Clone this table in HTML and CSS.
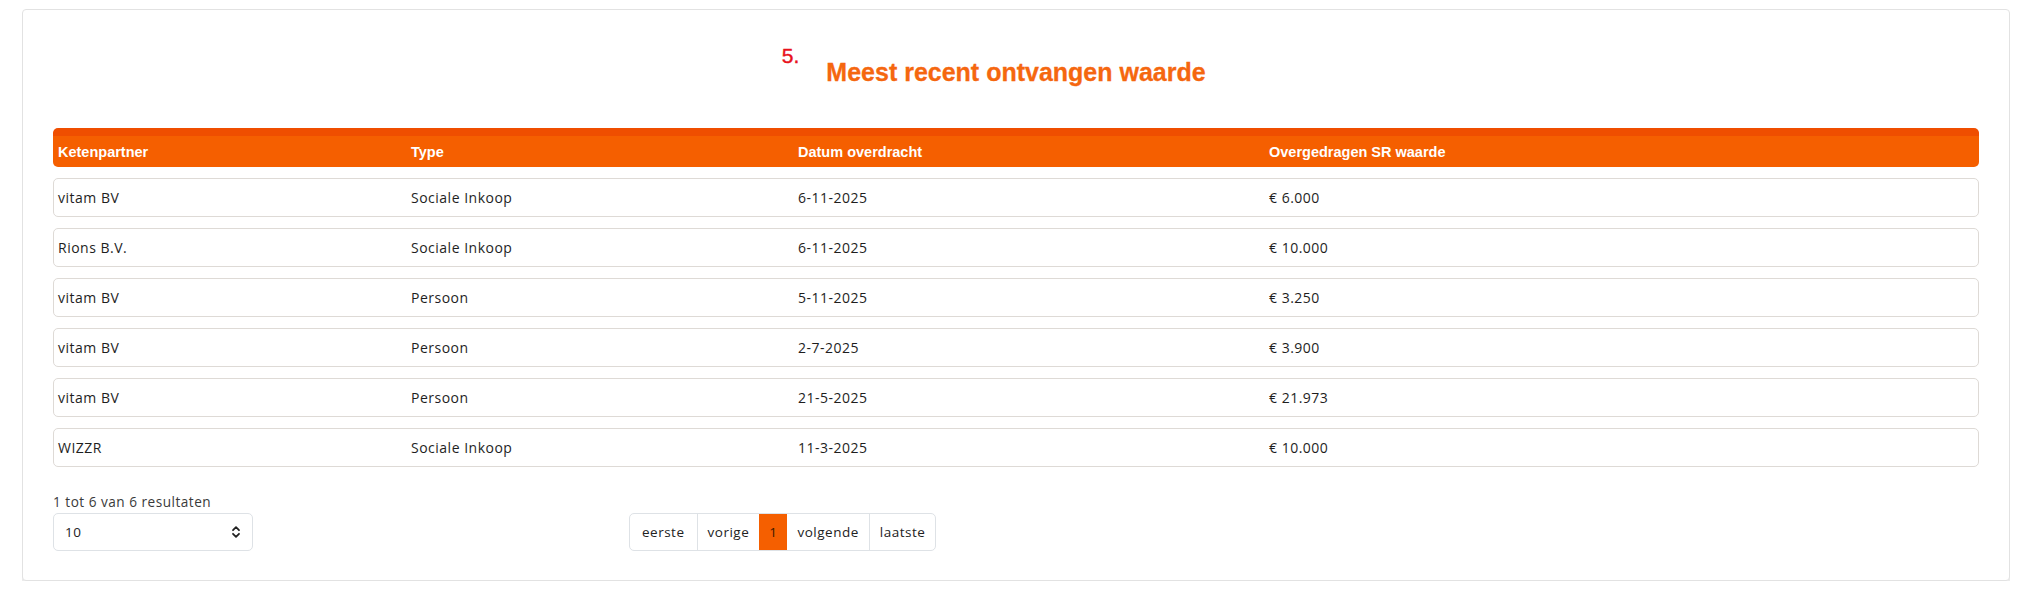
FILE: index.html
```html
<!DOCTYPE html>
<html lang="nl">
<head>
<meta charset="utf-8">
<title>Meest recent ontvangen waarde</title>
<link rel="stylesheet" href="styles.css">
</head>
<body>
<div class="page">
  <section class="card">
    <h2 class="title"><span class="title-text"><span class="marker">5.</span>Meest recent ontvangen waarde</span></h2>

    <div class="table">
      <div class="thead">
        <div>Ketenpartner</div>
        <div>Type</div>
        <div>Datum overdracht</div>
        <div>Overgedragen SR waarde</div>
      </div>
      <div class="row"><div>vitam BV</div><div>Sociale Inkoop</div><div>6-11-2025</div><div>€ 6.000</div></div>
      <div class="row"><div>Rions B.V.</div><div>Sociale Inkoop</div><div>6-11-2025</div><div>€ 10.000</div></div>
      <div class="row"><div>vitam BV</div><div>Persoon</div><div>5-11-2025</div><div>€ 3.250</div></div>
      <div class="row"><div>vitam BV</div><div>Persoon</div><div>2-7-2025</div><div>€ 3.900</div></div>
      <div class="row"><div>vitam BV</div><div>Persoon</div><div>21-5-2025</div><div>€ 21.973</div></div>
      <div class="row"><div>WIZZR</div><div>Sociale Inkoop</div><div>11-3-2025</div><div>€ 10.000</div></div>
    </div>

    <div class="footer">
      <div class="length">
        <div class="info">1 tot 6 van 6 resultaten</div>
        <div class="select">
          <span>10</span>
          <svg class="chev" width="10" height="14" viewBox="0 0 10 14" aria-hidden="true">
            <path d="M2 5.2 L5 2.2 L8 5.2" fill="none" stroke="#222" stroke-width="1.8" stroke-linecap="round" stroke-linejoin="round"/>
            <path d="M2 8.8 L5 11.8 L8 8.8" fill="none" stroke="#222" stroke-width="1.8" stroke-linecap="round" stroke-linejoin="round"/>
          </svg>
        </div>
      </div>
      <nav class="pager">
        <span class="pg">eerste</span>
        <span class="pg">vorige</span>
        <span class="pg active">1</span>
        <span class="pg">volgende</span>
        <span class="pg">laatste</span>
      </nav>
    </div>
  </section>
</div>
</body>
</html>
```

FILE: styles.css
```css
html, body {
  margin: 0;
  padding: 0;
  background: #ffffff;
}

body {
  font-family: "Open Sans", "Liberation Sans", sans-serif;
  color: #212529;
}

.page {
  padding: 9px 18px 0 22px;
}

.card {
  border: 1px solid #e2e2e2;
  border-radius: 4px;
  box-shadow: 0 7px 0 0 #ececec;
  padding: 0 30px 29px 30px;
  background: #fff;
}

.title {
  margin: 47px 0 41px 0;
  text-align: center;
  font-family: "Liberation Sans", Arial, sans-serif;
  font-weight: 700;
  font-size: 25px;
  line-height: 30px;
  color: #f5670f;
  -webkit-text-stroke: 0.3px #f5670f;
}

.title-text {
  position: relative;
}

.marker {
  position: absolute;
  right: calc(100% + 27px);
  top: -13px;
  font-family: "Liberation Sans", Arial, sans-serif;
  font-weight: 400;
  font-size: 21px;
  line-height: 21px;
  color: #e8121c;
  -webkit-text-stroke: 0.4px #e8121c;
  white-space: nowrap;
}

.table {
  display: flex;
  flex-direction: column;
  gap: 11px;
}

.thead,
.row {
  display: grid;
  grid-template-columns: 353px 387px 471px 1fr;
  align-items: center;
}

.thead {
  height: 31px;
  border-top: 8px solid #ef4e00;
  background: #f55f00;
  border-radius: 5px;
  padding-left: 5px;
  font-family: "Liberation Sans", Arial, sans-serif;
  font-weight: 700;
  font-size: 14.5px;
  color: #ffffff;
}

.row {
  height: 37px;
  border: 1px solid #dedad6;
  border-radius: 5px;
  padding-left: 4px;
  font-size: 14px;
  letter-spacing: 0.5px;
  color: #1e1e1e;
}

.footer {
  display: flex;
  align-items: flex-end;
  gap: 376px;
  margin-top: 25px;
}

.length {
  width: 200px;
}

.info {
  font-size: 13.6px;
  letter-spacing: 0.5px;
  line-height: 20px;
  color: #3a3a3a;
  margin-bottom: 1px;
}

.select {
  box-sizing: border-box;
  height: 38px;
  border: 1px solid #dee2e6;
  border-radius: 5px;
  padding: 0 11px 0 11px;
  display: flex;
  align-items: center;
  justify-content: space-between;
  font-size: 13.5px;
  letter-spacing: 0.5px;
  color: #222;
}

.chev {
  display: block;
}

.pager {
  display: flex;
  box-sizing: border-box;
  height: 38px;
  border: 1px solid #dee2e6;
  border-radius: 5px;
  overflow: hidden;
}

.pg {
  display: flex;
  align-items: center;
  padding: 0 10px;
  font-size: 13.5px;
  letter-spacing: 0.5px;
  color: #222;
  border-left: 1px solid #dee2e6;
}

.pg:first-child {
  border-left: none;
  padding: 0 12px;
}

.pg.active {
  background: #f55f00;
  color: #3a1800;
  border-left-color: #f55f00;
  margin: -1px 0;
  padding: 0 9px;
}

.pg.active + .pg {
  border-left-color: #f55f00;
}
```
